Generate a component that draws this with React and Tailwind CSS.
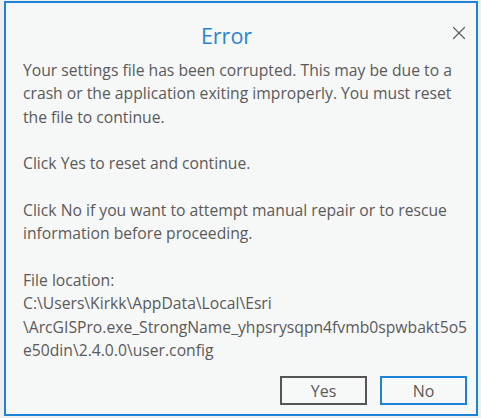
import { X } from "lucide-react";

const paragraphs = [
  [
    "Your settings file has been corrupted. This may be due to a",
    "crash or the application exiting improperly. You must reset",
    "the file to continue.",
  ],
  ["Click Yes to reset and continue."],
  [
    "Click No if you want to attempt manual repair or to rescue",
    "information before proceeding.",
  ],
  [
    "File location:",
    "C:\\Users\\Kirkk\\AppData\\Local\\Esri",
    "\\ArcGISPro.exe_StrongName_yhpsrysqpn4fvmb0spwbakt5o5",
    "e50din\\2.4.0.0\\user.config",
  ],
];

export default function App() {
  return (
    <div className="w-[481px] h-[418px] bg-[#eeefef] pt-px pl-1 overflow-hidden font-['Open_Sans',sans-serif]">
      <div className="relative w-[474px] h-[415px] border-2 border-[#1c83d6] bg-[#f6f7f7] flex flex-col">
        {/* Titre */}
        <div className="pt-[18px] pr-[29px] text-center text-[21.5px] leading-[30px] text-[#2a84d2]">
          Error
        </div>
        <button className="absolute top-[19px] right-[6px] text-[#5f5f5f]">
          <X size={22} strokeWidth={1.3} />
        </button>

        {/* Message */}
        <div className="mt-2 pl-[17px] text-[15.7px] leading-[23.33px] text-[#5a5a5a]">
          {paragraphs.map((lines, i) => (
            <div key={i}>
              {i > 0 && <div className="h-[23.33px]" />}
              {lines.map((line) => (
                <div key={line} className="whitespace-nowrap">
                  {line}
                </div>
              ))}
            </div>
          ))}
        </div>

        {/* Boutons */}
        <div className="mt-auto pb-[9px] pr-[9px] flex justify-end gap-[13px]">
          <button className="w-[87px] h-[29px] border-2 border-[#555555] text-[16px] text-[#5a5a5a] bg-[#f7f8f8]">
            Yes
          </button>
          <button className="w-[87px] h-[29px] border-2 border-[#1c83d6] text-[16px] text-[#5a5a5a] bg-[#f7f8f8]">
            No
          </button>
        </div>
      </div>
    </div>
  );
}
